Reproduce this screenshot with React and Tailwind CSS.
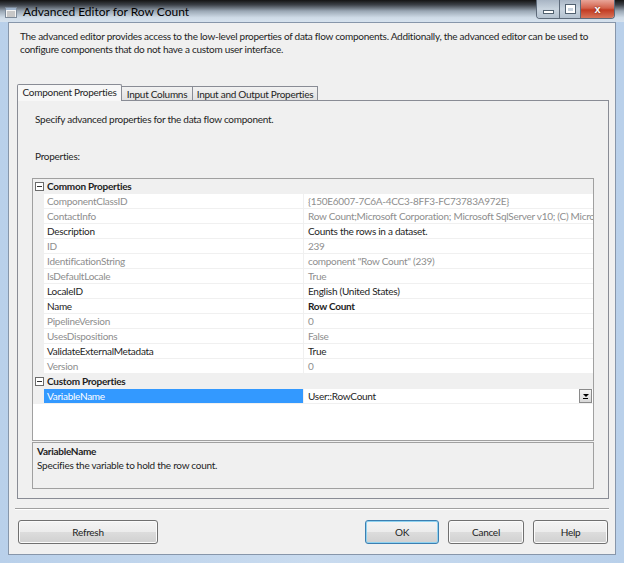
import React from "react";

const rows = [
    {name: "ComponentClassID", value: "{150E6007-7C6A-4CC3-8FF3-FC73783A972E}", ro: true},
    {name: "ContactInfo", value: "Row Count;Microsoft Corporation; Microsoft SqlServer v10; (C) Microsoft Corporation", ro: true},
    {name: "Description", value: "Counts the rows in a dataset."},
    {name: "ID", value: "239", ro: true},
    {name: "IdentificationString", value: 'component "Row Count" (239)', ro: true},
    {name: "IsDefaultLocale", value: "True", ro: true},
    {name: "LocaleID", value: "English (United States)"},
    {name: "Name", value: "Row Count", bold: true},
    {name: "PipelineVersion", value: "0", ro: true},
    {name: "UsesDispositions", value: "False", ro: true},
    {name: "ValidateExternalMetadata", value: "True"},
    {name: "Version", value: "0", ro: true},
];

function Category({label}) {
    return (
        <div className="h-[15px] flex items-center bg-[#f0f0f0] border-b border-[#f0f0f0]">
            <span className="ml-[2px] w-[9px] h-[9px] border border-[#6b6b6b] bg-white flex items-center justify-center">
                <span className="w-[5px] h-px bg-[#333]"></span>
            </span>
            <span className="ml-[3px] font-bold text-[#1e1e1e]">{label}</span>
        </div>
    );
}

function PropRow({row}) {
    return (
        <div className="h-[15px] flex border-b border-[#f0f0f0]">
            <div className="w-[11px] bg-[#f0f0f0]"></div>
            <div className={"w-[260px] pl-[3px] border-r border-[#f0f0f0] leading-[14px] " + (row.ro ? "text-[#8e8e8e]" : "text-[#1e1e1e]")}>
                {row.name}
            </div>
            <div className={"w-[289px] pl-[4px] whitespace-nowrap overflow-hidden leading-[14px] " + (row.ro ? "text-[#8e8e8e]" : "text-[#1e1e1e]") + (row.bold ? " font-bold" : "")}>
                {row.value}
            </div>
        </div>
    );
}

function WinButton({children, primary, className}) {
    return (
        <div className={"h-[24px] rounded-[3px] border flex items-center justify-center bg-[linear-gradient(to_bottom,#f4f4f4_0%,#ececec_48%,#dcdcdc_52%,#d0d0d0_100%)] text-[#1e1e1e] " + (primary ? "border-[#3c7fb1] shadow-[inset_0_0_0_1px_#8fd2f0]" : "border-[#707070] shadow-[inset_0_0_0_1px_#fbfbfb]") + " " + className}>
            {children}
        </div>
    );
}

export default function App() {
    return (
        <div className="w-[624px] h-[563px] overflow-hidden flex flex-col bg-[linear-gradient(to_right,#b9d0ea,#c9dbef_50%,#b9d0ea)] font-['Lato','Liberation_Sans',sans-serif] text-[10px] leading-[13px] tracking-[-0.27px] text-[#1e1e1e]">
            {/* title bar */}
            <div className="h-[22px] flex items-start bg-[linear-gradient(to_bottom,#141414_0%,#3c4148_22%,#9aa7b4_50%,#cfdbe7_80%,#d6e2ee_100%)]">
                <svg width="12" height="11" viewBox="0 0 12 11" className="ml-[5px] mt-[7px]">
                    <rect x="0.5" y="0.5" width="11" height="10" fill="#f4f4f4" stroke="#7d8a99"/>
                    <rect x="1" y="1" width="10" height="2" fill="#9fb4cc"/>
                    <line x1="2" y1="5" x2="10" y2="5" stroke="#9a9a9a"/>
                    <line x1="2" y1="7" x2="10" y2="7" stroke="#9a9a9a"/>
                    <line x1="2" y1="9" x2="10" y2="9" stroke="#9a9a9a"/>
                </svg>
                <span className="ml-[6px] mt-[5px] text-[12px] leading-[14px] tracking-normal text-black">Advanced Editor for Row Count</span>
                <div className="ml-auto mr-[9px] flex h-[19px] rounded-b-[4px] border border-t-0 border-[#5d6a7a] overflow-hidden">
                    <div className="w-[23px] flex items-center justify-center bg-[linear-gradient(to_bottom,#a8b5c4,#c9d4df_50%,#b3c1cf)] border-r border-[#5d6a7a]">
                        <span className="w-[9px] h-[2px] bg-white mt-[6px] shadow-[0_0_0_1px_#50606f]"></span>
                    </div>
                    <div className="w-[21px] flex items-center justify-center bg-[linear-gradient(to_bottom,#a8b5c4,#c9d4df_50%,#b3c1cf)] border-r border-[#5d6a7a]">
                        <span className="w-[9px] h-[8px] border-2 border-white border-t-[3px] shadow-[0_0_0_1px_#50606f]"></span>
                    </div>
                    <div className="w-[33px] flex items-center justify-center bg-[linear-gradient(to_bottom,#e8a598,#d3624c_45%,#c23b22_55%,#d8755a)]">
                        <span className="text-white font-bold text-[11px] leading-none tracking-normal [text-shadow:0_0_2px_#5a1a10] font-['Liberation_Sans',sans-serif]">x</span>
                    </div>
                </div>
            </div>

            {/* client */}
            <div className="mx-[8px] h-[533px] bg-[#f0f0f0] border border-[#8796aa] flex flex-col">
                <div className="h-[61px] pt-[7px] pl-[11px]">
                    The advanced editor provides access to the low-level properties of data flow components. Additionally, the advanced editor can be used to
                    <br/>
                    configure components that do not have a custom user interface.
                </div>

                {/* tabs */}
                <div className="h-[16px] ml-[8px] flex items-end">
                    <div className="w-[105px] h-[17px] -mb-px relative z-10 border border-b-0 border-[#898c95] bg-[#f7f7f7] leading-[15px] text-center rounded-t-[2px]">
                        Component Properties
                    </div>
                    <div className="w-[71px] h-[14px] border border-l-0 border-b-0 border-[#898c95] bg-[linear-gradient(to_bottom,#f2f2f2,#e1e1e1)] leading-[14px] text-center">
                        Input Columns
                    </div>
                    <div className="w-[125px] h-[14px] border border-l-0 border-b-0 border-[#898c95] bg-[linear-gradient(to_bottom,#f2f2f2,#e1e1e1)] leading-[14px] text-center">
                        Input and Output Properties
                    </div>
                </div>

                {/* tab panel */}
                <div className="ml-[8px] mr-[6px] h-[399px] border border-[#898c95] bg-[#f0f0f0] flex flex-col">
                    <div className="pt-[12px] pl-[17px]">Specify advanced properties for the data flow component.</div>
                    <div className="mt-[24px] pl-[17px]">Properties:</div>

                    <div className="mt-[15px] ml-[14px] w-[562px] h-[263px] border border-[#a0a0a0] bg-white flex flex-col overflow-hidden">
                        <Category label="Common Properties"/>
                        {rows.map((r) => (
                            <PropRow key={r.name} row={r}/>
                        ))}
                        <Category label="Custom Properties"/>
                        <div className="h-[15px] flex border-b border-[#f0f0f0]">
                            <div className="w-[11px] bg-[#f0f0f0]"></div>
                            <div className="w-[260px] pl-[3px] bg-[#3399ff] text-white leading-[14px] border-r border-[#f0f0f0]">VariableName</div>
                            <div className="flex-1 pl-[4px] leading-[14px] flex items-center">
                                <span className="flex-1 leading-[14px]">User::RowCount</span>
                                <span className="w-[13px] h-[14px] mr-px border border-[#8a8a8a] bg-[linear-gradient(to_bottom,#f4f4f4,#d8d8d8)] flex flex-col items-center justify-center">
                                    <span className="w-0 h-0 border-l-[3px] border-r-[3px] border-t-[3px] border-l-transparent border-r-transparent border-t-black"></span>
                                    <span className="w-[5px] h-px bg-black mt-px"></span>
                                </span>
                            </div>
                        </div>
                    </div>

                    <div className="mt-[1px] ml-[14px] w-[562px] h-[47px] border border-[#a0a0a0] bg-[#f0f0f0] pl-[4px] pt-[2px]">
                        <div className="font-bold">VariableName</div>
                        <div className="mt-px">Specifies the variable to hold the row count.</div>
                    </div>
                </div>

                {/* separator */}
                <div className="mt-[9px] mx-[6px] h-[2px] border-t border-[#a0a0a0] border-b border-b-white"></div>

                {/* buttons */}
                <div className="mt-[10px] flex items-center pl-[9px] pr-[7px]">
                    <WinButton className="w-[140px]">Refresh</WinButton>
                    <WinButton primary className="w-[74px] ml-auto">OK</WinButton>
                    <WinButton className="w-[76px] ml-[9px]">Cancel</WinButton>
                    <WinButton className="w-[75px] ml-[9px]">Help</WinButton>
                </div>
            </div>
        </div>
    );
}
